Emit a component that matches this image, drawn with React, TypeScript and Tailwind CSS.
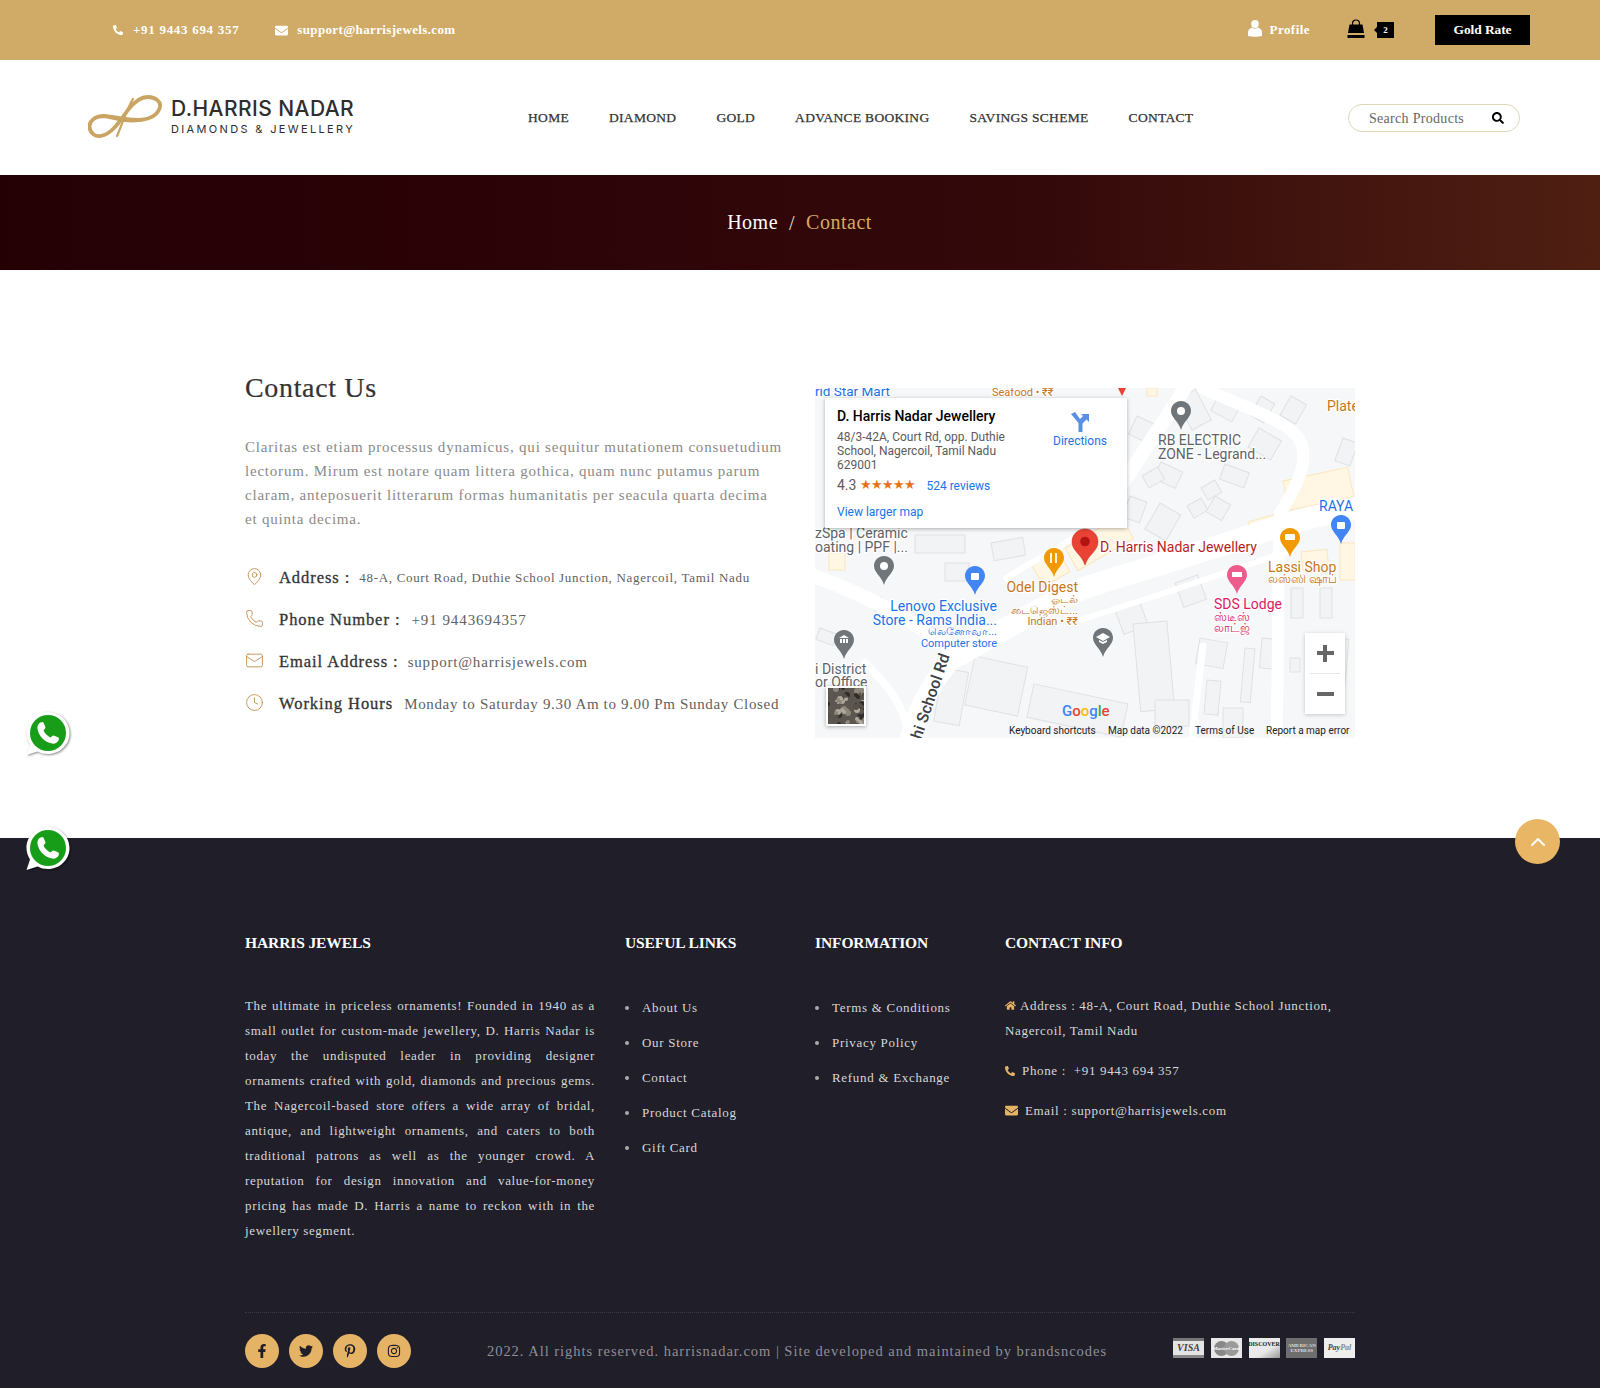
import { ChevronUp, Clock, Mail, MapPin, Phone } from 'lucide-react';
import {
  FaEnvelope,
  FaFacebookF,
  FaHome,
  FaInstagram,
  FaPhoneAlt,
  FaPinterestP,
  FaSearch,
  FaTwitter,
} from 'react-icons/fa';

const navItems = ['HOME', 'DIAMOND', 'GOLD', 'ADVANCE BOOKING', 'SAVINGS SCHEME', 'CONTACT'];
const usefulLinks = ['About Us', 'Our Store', 'Contact', 'Product Catalog', 'Gift Card'];
const infoLinks = ['Terms & Conditions', 'Privacy Policy', 'Refund & Exchange'];

function Logo() {
  return (
    <div className="flex items-center gap-[9px]">
      <svg width="74" height="46" viewBox="0 0 74 46" fill="none" stroke="#c9a462" strokeLinecap="round">
        <path
          d="M58 24C45 27 30 22 16 21C6 21 1 27 1.5 32C2 39 8 42 13 41C24 39 32 26 40 15C46 7 52 2 60 2C68 2 73 7 72 12C70 19 63 24 52 25C40 27 30 24 16 21"
          strokeWidth="3.8"
        />
        <path d="M29 41C34 30 38 15 45 4" strokeWidth="2.2" />
      </svg>
      <div className="mb-[2px] font-['Inter',sans-serif] text-[#2f2d2e]">
        <div className="text-[21px] leading-[24px] font-medium tracking-[0.45px]">D.HARRIS NADAR</div>
        <div className="mt-px text-[11px] leading-[14px] tracking-[2.35px]">DIAMONDS &amp; JEWELLERY</div>
      </div>
    </div>
  );
}

function TopBar() {
  return (
    <div className="flex h-[60px] items-center justify-between bg-[#d0ab67] pr-[70px] pl-[113px] text-[13px] font-bold text-white">
      <div className="flex items-center">
        <FaPhoneAlt className="mr-[10px] h-[10px] w-[10px]" />
        <span className="tracking-[0.7px]">+91 9443 694 357</span>
        <FaEnvelope className="mr-[9px] ml-[36px] h-[13px] w-[13px]" />
        <span className="tracking-[0.35px]">support@harrisjewels.com</span>
      </div>
      <div className="flex items-center">
        <svg width="14" height="17" viewBox="0 0 14 17" fill="#fff" className="mr-[8px] mb-[3px]">
          <ellipse cx="7" cy="4" rx="3.8" ry="4" />
          <path d="M0 16V12C0 9.5 2 8.5 4 7.5C5.5 9 8.5 9 10 7.5C12 8.5 14 9.5 14 12V16C10 17 4 17 0 16Z" />
        </svg>
        <span className="tracking-[0.45px]">Profile</span>
        <svg width="18" height="19" viewBox="0 0 18 19" className="mb-[3px] ml-[37px]">
          <path d="M5.5 7V4.5C5.5 2.5 7 1 9 1C11 1 12.5 2.5 12.5 4.5V7" fill="none" stroke="#000" strokeWidth="1.2" />
          <path d="M2.5 5.5H15.5L17 14H1Z" fill="#000" />
          <path d="M0.5 16H17.5V19H0.5Z" fill="#000" />
        </svg>
        <span className="relative ml-[12px] flex h-[16px] w-[17px] items-center justify-center bg-black text-[9px] leading-none">
          2
          <span className="absolute top-[5px] left-[-3px] h-0 w-0 border-y-[3px] border-r-[3px] border-y-transparent border-r-black" />
        </span>
        <button className="ml-[41px] h-[30px] w-[95px] bg-black text-[13.5px] font-bold tracking-[-0.1px] text-white">Gold Rate</button>
      </div>
    </div>
  );
}

function Header() {
  return (
    <header className="flex h-[115px] items-center bg-white pr-[80px] pl-[88px]">
      <Logo />
      <nav className="mt-[1px] ml-[173px] flex gap-[40px] text-[13.5px] tracking-[0.3px] text-[#333] [-webkit-text-stroke:0.25px]">
        {navItems.map((item) => (
          <a key={item}>{item}</a>
        ))}
      </nav>
      <div className="ml-auto flex h-[28px] w-[172px] items-center justify-between rounded-full border border-[#e2d6b8] pr-[15px] pl-[20px] text-[14px] tracking-[0.3px] text-[#666]">
        <span className="mt-[1px]">Search Products</span>
        <FaSearch className="h-[12px] w-[12px] text-black" />
      </div>
    </header>
  );
}

function Breadcrumb() {
  return (
    <div className="flex h-[95px] items-center justify-center bg-gradient-to-r from-[#240005] via-[#34090a] via-65% to-[#4f1f12] pr-[1px] pb-[2px] text-[20px] tracking-[0.5px]">
      <span className="text-white">Home</span>
      <span className="mx-[11px] mt-[3px] text-[#e8dccb]">/</span>
      <span className="text-[#d6a961]">Contact</span>
    </div>
  );
}

function ContactRow({ icon, label, value, valueClass }: { icon: React.ReactNode; label: string; value: string; valueClass: string }) {
  return (
    <div className="flex h-[42px] items-center">
      <span className="mb-[3px] w-[34px] shrink-0 text-[#c4935a]">{icon}</span>
      <span className="text-[16.5px] tracking-[0.95px] text-[#333] [-webkit-text-stroke:0.3px]">{label}</span>
      <span className={`text-[#5f5f5f] ${valueClass}`}>{value}</span>
    </div>
  );
}

function MapPinMark({ x, y, color, children }: { x: number; y: number; color: string; children?: React.ReactNode }) {
  return (
    <g transform={`translate(${x - 10} ${y})`}>
      <path d="M10 0C4.5 0 0 4.3 0 9.8C0 17 7.5 20 10 29C12.5 20 20 17 20 9.8C20 4.3 15.5 0 10 0Z" fill={color} />
      {children ?? <circle cx="10" cy="10" r="4" fill="#fff" />}
    </g>
  );
}

function Buildings() {
  // x, y, w, h, rotation
  const grey = [
    [361, 12, 22, 34, -28],
    [405, 5, 24, 20, 28],
    [444, 40, 26, 22, 30],
    [322, 28, 24, 20, 25],
    [346, 74, 24, 18, 25],
    [410, 76, 26, 16, 20],
    [327, 88, 18, 14, -30],
    [386, 100, 16, 14, -30],
    [315, 108, 18, 22, 20],
    [345, 115, 24, 30, 30],
    [372, 118, 16, 14, -30],
    [400, 108, 18, 18, 30],
    [528, 50, 16, 24, 20],
    [446, 8, 16, 22, 30],
    [476, 8, 18, 22, 30],
    [360, 195, 24, 26, -20],
    [300, 222, 26, 26, -20],
    [318, 236, 34, 88, -5],
    [219, 296, 96, 34, 12],
    [160, 268, 54, 50, 12],
    [128, 280, 26, 54, 10],
    [340, 312, 34, 26, 0],
    [385, 250, 28, 26, 10],
    [392, 292, 14, 34, 5],
    [430, 260, 10, 54, 5],
    [447, 250, 14, 30, 5],
    [476, 200, 12, 30, 0],
    [505, 200, 12, 30, 0],
    [475, 270, 10, 14, 0],
    [408, 320, 20, 30, 0],
    [100, 147, 50, 18, 0],
    [176, 155, 32, 18, -10],
    [55, 215, 12, 14, -30],
    [5, 240, 18, 12, 20],
    [130, 175, 24, 18, 0],
    [520, 250, 14, 60, 5],
  ];
  const tan = [
    [468, 93, 66, 30, -12],
    [433, 134, 26, 18, -16],
    [486, 164, 26, 18, -6],
    [525, 155, 15, 37, 0],
    [250, 160, 64, 26, -30],
    [216, 176, 30, 26, -30],
    [14, 165, 16, 17, 0],
    [332, 0, 10, 8, 0],
  ];
  return (
    <>
      {grey.map(([x, y, w, h, r], i) => (
        <rect key={i} x={x} y={y} width={w} height={h} fill="#f1f3f4" stroke="#dfe1e5" strokeWidth="1" transform={`rotate(${r} ${x} ${y})`} />
      ))}
      {tan.map(([x, y, w, h, r], i) => (
        <rect key={i} x={x} y={y} width={w} height={h} fill="#fff7e3" stroke="#fbe6bd" strokeWidth="1" transform={`rotate(${r} ${x} ${y})`} />
      ))}
    </>
  );
}

function MapLabel({ x, y, color, size = 14, anchor = 'start', children }: { x: number; y: number; color: string; size?: number; anchor?: 'start' | 'end'; children: React.ReactNode }) {
  return (
    <text x={x} y={y + 1} fill={color} fontSize={size} textAnchor={anchor} dominantBaseline="middle" stroke="#fff" strokeWidth="2.5" paintOrder="stroke">
      {children}
    </text>
  );
}

// satellite preview blotches, fixed so every render is the same
const satelliteSpots = Array.from({ length: 90 }, (_, i) => ({
  cx: (i * 17 + (i % 7) * 3) % 40,
  cy: (i * 29 + (i % 5) * 5) % 40,
  r: 1 + (i % 3),
  fill: ['#2f2c28', '#8d867a', '#57514a', '#b0a99c'][i % 4],
}));

function GoogleMap() {
  const slate = '#70757a';
  const blue = '#1a73e8';
  const orange = '#c5761d';
  return (
    <div className="relative h-[350px] w-[540px] shrink-0 overflow-hidden bg-[#f5f5f5] font-['Roboto',sans-serif]">
      <svg width="540" height="350" viewBox="0 0 540 350" className="block font-['Roboto','Noto_Sans',sans-serif]">
        <rect width="540" height="350" fill="#f6f7f8" />
        <Buildings />
        <g fill="none" stroke="#fff" strokeLinecap="round">
          <path d="M142 268C180 248 230 215 275 198C340 178 400 160 465 138C490 130 515 125 550 118" strokeWidth="22" />
          <path d="M-10 185C50 205 100 235 145 265" strokeWidth="14" />
          <path d="M92 360C100 330 110 300 142 265" strokeWidth="20" />
          <path d="M50 275C70 295 90 315 95 352" strokeWidth="8" />
          <path d="M191 190C215 175 235 165 262 148" strokeWidth="6" />
          <path d="M310 92C330 60 352 30 373 -5" strokeWidth="14" />
          <path d="M388 0C430 20 465 30 482 48C495 65 488 90 465 125C462 200 464 280 461 360" strokeWidth="12" />
          <path d="M265 232C310 218 350 205 388 192C420 182 445 172 470 165" strokeWidth="6" />
          <path d="M377 350L388 258" strokeWidth="7" />
        </g>
        <path d="M303 0L311 0L307 8Z" fill="#ea4335" />
        <MapLabel x={0} y={3} color={blue} size={13.5}>rid Star Mart</MapLabel>
        <MapLabel x={177} y={4} color={orange} size={11}>Seafood • ₹₹</MapLabel>
        <MapLabel x={512} y={18} color={orange}>Plate</MapLabel>
        <MapPinMark x={366} y={13} color={slate} />
        <MapLabel x={343} y={52} color="#5f6368">RB ELECTRIC</MapLabel>
        <MapLabel x={343} y={66} color="#5f6368">ZONE - Legrand...</MapLabel>
        <MapLabel x={504} y={118} color={blue}>RAYA</MapLabel>
        <MapPinMark x={526} y={127} color="#4285f4">
          <rect x="6" y="7" width="8" height="7" rx="1" fill="#fff" />
        </MapPinMark>
        <MapLabel x={0} y={145} color="#5f6368">zSpa | Ceramic</MapLabel>
        <MapLabel x={0} y={159} color="#5f6368">oating | PPF |...</MapLabel>
        <MapPinMark x={69} y={168} color={slate} />
        <MapPinMark x={160} y={178} color="#4285f4">
          <rect x="6" y="7" width="8" height="7" rx="1" fill="#fff" />
        </MapPinMark>
        <MapPinMark x={239} y={160} color="#f29900">
          <path d="M7 5V15M12 5V15" stroke="#fff" strokeWidth="1.8" />
        </MapPinMark>
        <MapPinMark x={475} y={140} color="#f29900">
          <rect x="5" y="6" width="10" height="6" rx="1" fill="#fff" />
        </MapPinMark>
        <MapPinMark x={422} y={177} color="#ee5c8c">
          <rect x="5" y="7" width="10" height="5" fill="#fff" />
        </MapPinMark>
        <MapPinMark x={29} y={242} color={slate}>
          <path d="M5 8L10 5L15 8ZM6 9H8V13H6ZM9 9H11V13H9ZM12 9H14V13H12Z" fill="#fff" />
        </MapPinMark>
        <MapPinMark x={288} y={240} color={slate}>
          <path d="M3 9L10 5L17 9L10 13ZM6 12V14L10 16L14 14V12L10 14Z" fill="#fff" />
        </MapPinMark>
        <g transform="translate(257 141)">
          <path d="M13 0C5.8 0 0 5.6 0 12.8C0 22 9.5 25 13 36C16.5 25 26 22 26 12.8C26 5.6 20.2 0 13 0Z" fill="#ea4335" stroke="#c5221f" strokeWidth="0.5" />
          <circle cx="13" cy="12.5" r="4.8" fill="#b31412" />
        </g>
        <MapLabel x={285} y={159} color="#b3261e">D. Harris Nadar Jewellery</MapLabel>
        <MapLabel x={263} y={199} anchor="end" color={orange}>Odel Digest</MapLabel>
        <MapLabel x={263} y={211} anchor="end" color={orange} size={11}>ஓடல்</MapLabel>
        <MapLabel x={263} y={222} anchor="end" color={orange} size={11}>டைஜெஸ்ட்...</MapLabel>
        <MapLabel x={263} y={233} anchor="end" color={orange} size={11}>Indian • ₹₹</MapLabel>
        <MapLabel x={182} y={218} anchor="end" color={blue}>Lenovo Exclusive</MapLabel>
        <MapLabel x={182} y={232} anchor="end" color={blue}>Store - Rams India...</MapLabel>
        <MapLabel x={182} y={243} anchor="end" color={blue} size={11}>லெனோவா...</MapLabel>
        <MapLabel x={182} y={255} anchor="end" color={blue} size={11}>Computer store</MapLabel>
        <MapLabel x={453} y={179} color={orange}>Lassi Shop</MapLabel>
        <MapLabel x={453} y={191} color={orange} size={12}>லஸ்ஸி ஷாப்</MapLabel>
        <MapLabel x={399} y={216} color="#d81b60">SDS Lodge</MapLabel>
        <MapLabel x={399} y={229} color="#d81b60" size={12}>ஸ்டீஸ்</MapLabel>
        <MapLabel x={399} y={240} color="#d81b60" size={12}>லாட்ஜ்</MapLabel>
        <MapLabel x={0} y={281} color="#5f6368">i District</MapLabel>
        <MapLabel x={0} y={294} color="#5f6368">or Office</MapLabel>
        <text x="0" y="0" fontSize="16" fontWeight="500" fill="#3c4043" transform="translate(106 352) rotate(-71)" stroke="#fff" strokeWidth="2" paintOrder="stroke">
          hi School Rd
        </text>
        <text x="247" y="328" fontSize="15" fontWeight="500">
          <tspan fill="#4285f4">G</tspan>
          <tspan fill="#ea4335">o</tspan>
          <tspan fill="#fbbc05">o</tspan>
          <tspan fill="#4285f4">g</tspan>
          <tspan fill="#34a853">l</tspan>
          <tspan fill="#ea4335">e</tspan>
        </text>
        <g fontSize="10" fill="#222">
          <text x="194" y="346">Keyboard shortcuts</text>
          <text x="293" y="346">Map data ©2022</text>
          <text x="380" y="346">Terms of Use</text>
          <text x="451" y="346">Report a map error</text>
        </g>
      </svg>

      {/* place card sits over the map */}
      <div className="absolute top-[10px] left-[10px] h-[130px] w-[302px] bg-white p-[12px] pt-[9px] shadow-[0_1px_4px_rgba(0,0,0,0.3)]">
        <div className="text-[14px] leading-[18px] font-medium text-black">D. Harris Nadar Jewellery</div>
        <div className="mt-[5px] w-[185px] text-[12px] leading-[14px] text-[#5b5b5b]">
          48/3-42A, Court Rd, opp. Duthie School, Nagercoil, Tamil Nadu 629001
        </div>
        <div className="mt-[3px] flex items-center text-[12px] text-[#1a73e8]">
          <span className="text-[14px] text-[#5b5b5b]">4.3</span>
          <span className="ml-[4px] text-[12.5px] leading-none tracking-[-1.2px] text-[#e7711b]">★★★★★</span>
          <span className="ml-[12px]">524 reviews</span>
        </div>
        <div className="mt-[8px] text-[12px] leading-[16px] text-[#1a73e8]">View larger map</div>
        <div className="absolute top-[14px] right-[20px] flex w-[54px] flex-col items-center text-[12px] text-[#1a73e8]">
          <svg width="20" height="20" viewBox="0 0 20 20" fill="#5a8fe6">
            <path d="M1 2L5 0L10 7L13 4L11 2H19V10L16.5 7.5L12.5 11.5V20H8.5V11Z" />
          </svg>
          <span>Directions</span>
        </div>
      </div>

      {/* map controls */}
      <div className="absolute top-[245px] left-[490px] flex h-[81px] w-[40px] flex-col items-center bg-white shadow-[0_1px_4px_rgba(0,0,0,0.2)]">
        <span className="relative flex h-[40px] w-full items-center justify-center">
          <span className="h-[3.5px] w-[17px] bg-[#666]" />
          <span className="absolute h-[17px] w-[3.5px] bg-[#666]" />
        </span>
        <span className="h-px w-[30px] bg-[#e6e6e6]" />
        <span className="flex h-[40px] w-full items-center justify-center">
          <span className="h-[3.5px] w-[17px] bg-[#666]" />
        </span>
      </div>
      <div className="absolute top-[298px] left-[11px] h-[40px] w-[40px] overflow-hidden border-2 border-white bg-[#5b5650] shadow-[0_1px_4px_rgba(0,0,0,0.3)]">
        <svg width="40" height="40" viewBox="0 0 40 40">
          {satelliteSpots.map((s, i) => (
            <circle key={i} cx={s.cx} cy={s.cy} r={s.r} fill={s.fill} />
          ))}
        </svg>
      </div>
    </div>
  );
}

function ContactSection() {
  return (
    <section className="flex h-[568px] items-start justify-center gap-[30px] bg-white pt-[101px]">
      <div className="w-[540px]">
        <h2 className="text-[28px] leading-[34px] tracking-[0.65px] text-[#333] [-webkit-text-stroke:0.2px]">Contact Us</h2>
        <p className="mt-[30px] w-[538px] text-[15px] leading-[24px] tracking-[0.79px] text-[#8a8a8a]">
          Claritas est etiam processus dynamicus, qui sequitur mutationem consuetudium lectorum. Mirum est notare quam
          littera gothica, quam nunc putamus parum claram, anteposuerit litterarum formas humanitatis per seacula quarta
          decima et quinta decima.
        </p>
        <div className="mt-[26px]">
          <ContactRow
            icon={<MapPin className="h-[19px] w-[19px]" strokeWidth={1.2} />}
            label="Address :"
            value="48-A, Court Road, Duthie School Junction, Nagercoil, Tamil Nadu"
            valueClass="ml-[9px] text-[13px] tracking-[0.68px]"
          />
          <ContactRow
            icon={<Phone className="h-[19px] w-[19px]" strokeWidth={1.2} />}
            label="Phone Number :"
            value="+91 9443694357"
            valueClass="ml-[11px] text-[15px] tracking-[0.93px]"
          />
          <ContactRow
            icon={<Mail className="h-[19px] w-[19px]" strokeWidth={1.2} />}
            label="Email Address :"
            value="support@harrisjewels.com"
            valueClass="ml-[9px] text-[15px] tracking-[0.8px]"
          />
          <ContactRow
            icon={<Clock className="h-[19px] w-[19px]" strokeWidth={1.2} />}
            label="Working Hours"
            value="Monday to Saturday 9.30 Am to 9.00 Pm Sunday Closed"
            valueClass="ml-[11px] text-[15px] tracking-[0.66px]"
          />
        </div>
      </div>
      <div className="pt-[17px]">
        <GoogleMap />
      </div>
    </section>
  );
}

function FooterHeading({ children }: { children: React.ReactNode }) {
  return <h4 className="text-[15.5px] leading-[20px] font-bold tracking-[-0.1px] text-white">{children}</h4>;
}

function FooterList({ items }: { items: string[] }) {
  return (
    <ul className="mt-[37px] tracking-[0.7px]">
      {items.map((item) => (
        <li key={item} className="flex h-[35px] items-center">
          <span className="mr-[13px] h-[4px] w-[4px] rounded-full bg-[#aaa]" />
          {item}
        </li>
      ))}
    </ul>
  );
}

function PaymentCards() {
  return (
    <div className="mb-[6px] flex items-center gap-[6.75px] text-[7px] leading-none font-bold text-[#444]">
      <div className="flex h-[20px] w-[31px] flex-col justify-between bg-[#e4e4e4]">
        <span className="h-[3px] bg-[#777]" />
        <span className="text-center text-[10px] italic">VISA</span>
        <span className="h-[3px] bg-[#888]" />
      </div>
      <div className="relative flex h-[20px] w-[31px] items-center justify-center bg-[#e8e8e8]">
        <span className="absolute left-[3px] h-[15px] w-[15px] rounded-full bg-[#888]" />
        <span className="absolute right-[3px] h-[15px] w-[15px] rounded-full bg-[#9a9a9a]" />
        <span className="relative text-[5px] text-white">MasterCard</span>
      </div>
      <div className="flex h-[20px] w-[31px] items-start justify-center bg-gradient-to-br from-[#eee] via-[#e8e8e8] via-60% to-[#999] pt-[3px] text-[6px] text-[#222]">
        DISCOVER
      </div>
      <div className="flex h-[20px] w-[31px] items-center justify-center bg-[#6e6e6e] text-center text-[5px] text-[#ddd]">
        AMERICAN EXPRESS
      </div>
      <div className="flex h-[20px] w-[31px] items-center justify-center bg-[#eee] text-[8px] italic">
        Pay<span className="text-[#888]">Pal</span>
      </div>
    </div>
  );
}

function Footer() {
  const social = [FaFacebookF, FaTwitter, FaPinterestP, FaInstagram];
  return (
    <footer className="h-[550px] bg-[#1f1e29] pt-[95px]">
      <div className="mx-auto w-[1110px]">
        <div className="grid h-[380px] grid-cols-[350px_160px_160px_350px] gap-x-[30px] border-b border-dotted border-[#3a3945] text-[13px] tracking-[0.66px] text-[#d8d8d8]">
          <div>
            <FooterHeading>HARRIS JEWELS</FooterHeading>
            <p className="mt-[40px] text-justify leading-[25px]">
              The ultimate in priceless ornaments! Founded in 1940 as a small outlet for custom-made jewellery, D. Harris
              Nadar is today the undisputed leader in providing designer ornaments crafted with gold, diamonds and precious
              gems. The Nagercoil-based store offers a wide array of bridal, antique, and lightweight ornaments, and caters
              to both traditional patrons as well as the younger crowd. A reputation for design innovation and
              value-for-money pricing has made D. Harris a name to reckon with in the jewellery segment.
            </p>
          </div>
          <div>
            <FooterHeading>USEFUL LINKS</FooterHeading>
            <FooterList items={usefulLinks} />
          </div>
          <div>
            <FooterHeading>INFORMATION</FooterHeading>
            <FooterList items={infoLinks} />
          </div>
          <div>
            <FooterHeading>CONTACT INFO</FooterHeading>
            <div className="mt-[40px] leading-[25px]">
              <FaHome className="mr-[4px] inline h-[11px] w-[11px] align-[-1px] text-[#e5b365]" />
              Address : 48-A, Court Road, Duthie School Junction, Nagercoil, Tamil Nadu
            </div>
            <div className="mt-[15px] flex h-[25px] items-center">
              <FaPhoneAlt className="mr-[7px] h-[10px] w-[10px] text-[#e5b365]" />
              Phone :&nbsp; +91 9443 694 357
            </div>
            <div className="mt-[15px] flex h-[25px] items-center">
              <FaEnvelope className="mr-[7px] h-[13px] w-[13px] text-[#e5b365]" />
              Email : support@harrisjewels.com
            </div>
          </div>
        </div>
        <div className="mt-[21px] flex items-center justify-between">
          <div className="flex gap-[10px]">
            {social.map((Icon, i) => (
              <a key={i} className="flex h-[34px] w-[34px] items-center justify-center rounded-full bg-[#e5b365] text-[#1f1e29]">
                <Icon className="h-[14px] w-[14px]" />
              </a>
            ))}
          </div>
          <p className="mt-[2px] ml-[10px] text-[14.5px] tracking-[0.97px] text-[#8f8f96]">
            2022. All rights reserved. harrisnadar.com | Site developed and maintained by brandsncodes
          </p>
          <PaymentCards />
        </div>
      </div>
    </footer>
  );
}

function WhatsAppBadge({ className }: { className: string }) {
  return (
    <svg width="46" height="46" viewBox="0 0 46 46" className={`absolute left-[25px] drop-shadow-[1px_1px_1px_rgba(0,0,0,0.45)] ${className}`}>
      <path d="M23 1C10.5 1 1.5 10.5 1.5 22C1.5 26.5 3 30.5 5 33.5L1.5 44L12.5 40.5C15.5 42.2 19 43 23 43C35 43 44.5 33.5 44.5 22C44.5 10.5 35 1 23 1Z" fill="#fff" />
      <circle cx="23" cy="22" r="18" fill="#189d19" />
      <path
        d="M15.5 11.5L18 11C19 12.5 20 15 20.5 16.5C20.3 17.8 19 18.5 18.6 19.5C19.8 22.5 22.5 25.2 25.5 26.4C26.5 26 27.2 24.7 28.5 24.5C30 25 32.5 26 34 27L33.5 29.5C32.5 32 29.5 33 27 32.5C19.5 31 14 25.5 12.5 18C12 15.5 13 12.5 15.5 11.5Z"
        fill="#fff"
      />
    </svg>
  );
}

export default function App() {
  return (
    <div className="relative w-[1600px] overflow-hidden font-['Liberation_Serif',serif]">
      <TopBar />
      <Header />
      <Breadcrumb />
      <ContactSection />
      <Footer />
      <WhatsAppBadge className="top-[711px]" />
      <WhatsAppBadge className="top-[826px]" />
      <button className="absolute top-[819px] left-[1515px] flex h-[45px] w-[45px] items-center justify-center rounded-full bg-[#e9b665] text-white">
        <ChevronUp className="h-[24px] w-[24px]" strokeWidth={2} />
      </button>
    </div>
  );
}
